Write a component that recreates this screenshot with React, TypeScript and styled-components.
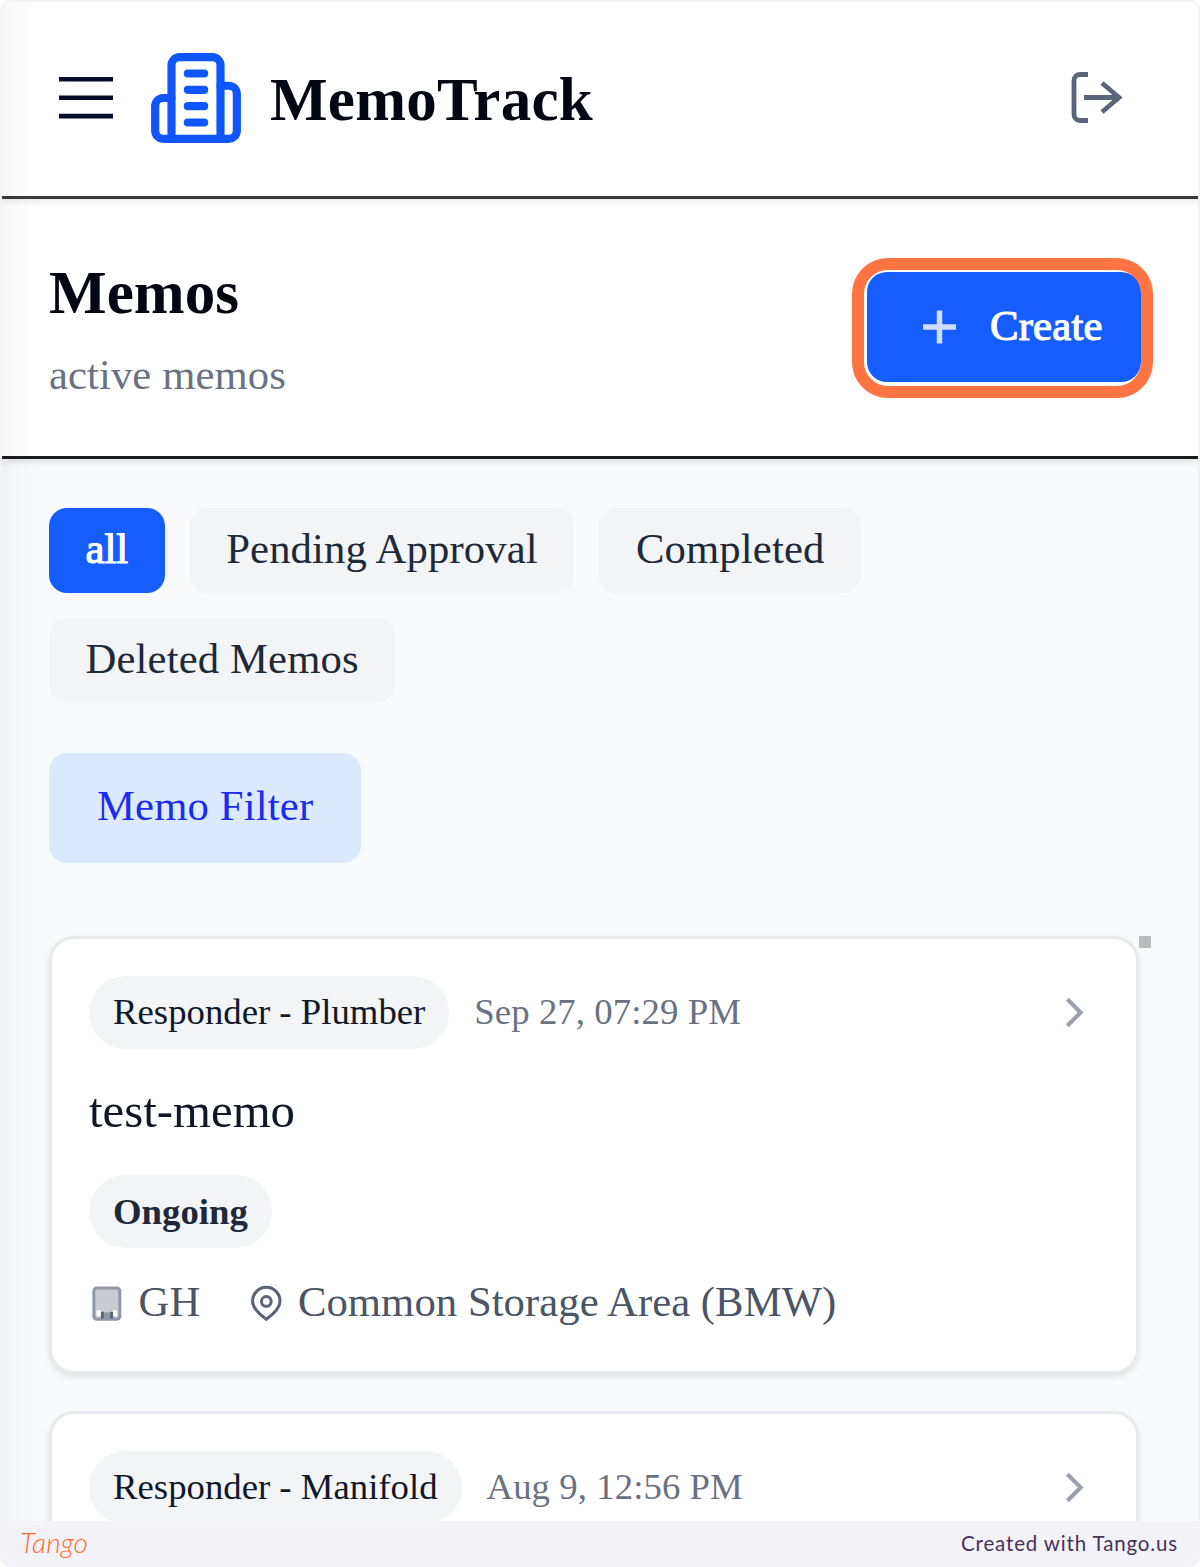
import React from "react";
import styled, { createGlobalStyle } from "styled-components";

const Global = createGlobalStyle`
  * { box-sizing: border-box; }
  html, body { margin: 0; padding: 0; background: #fff; }
  button { border: 0; margin: 0; font: inherit; cursor: pointer; }
  h1, h2, h3, p { margin: 0; font-weight: 400; }
`;

const serif = `"Liberation Serif", "Times New Roman", serif`;

const Frame = styled.div`
  width: 1200px;
  height: 1567px;
  display: flex;
  flex-direction: column;
  padding: 2px 2px 0;
  background: #f3f2f7;
  border-radius: 10px;
  overflow: hidden;
  font-family: ${serif};
`;

const Screen = styled.main`
  position: relative;
  height: 1519px;
  display: flex;
  flex-direction: column;
  overflow: hidden;
  border-radius: 8px 8px 0 0;
  background: #f9fafc;

  &::before {
    content: "";
    position: absolute;
    z-index: 3;
    inset: 0 auto 0 0;
    width: 38px;
    pointer-events: none;
    background: linear-gradient(90deg, rgba(20, 10, 20, 0.04), rgba(20, 10, 20, 0.014) 35%, rgba(20, 10, 20, 0));
  }
`;

const TopBar = styled.header`
  position: relative;
  z-index: 2;
  height: 197px;
  flex: none;
  display: flex;
  align-items: center;
  padding: 0 71px 2px 54px;
  background: #fff;
  border-bottom: 3px solid #3a3a3a;
  box-shadow: 0 2px 8px rgba(0, 0, 0, 0.1);
`;

const Brand = styled.div`
  flex: 1;
  display: flex;
  align-items: center;
  margin-left: 32px;
  gap: 25px;
`;

const BrandName = styled.h1`
  font-size: 61px;
  line-height: 85px;
  font-weight: 700;
  letter-spacing: 0.25px;
  color: #030712;
  padding-top: 3px;
`;

const PageHead = styled.section`
  position: relative;
  z-index: 1;
  height: 260px;
  flex: none;
  display: flex;
  justify-content: space-between;
  align-items: flex-start;
  padding: 49px 57px 0 47px;
  background: #fff;
  border-bottom: 3px solid #1c1c1c;
  box-shadow: 0 2px 8px rgba(0, 0, 0, 0.12);
`;

const Title = styled.h2`
  margin-top: 2px;
  font-size: 61px;
  line-height: 85px;
  font-weight: 700;
  letter-spacing: 0.1px;
  color: #030712;
`;

const Subtitle = styled.p`
  font-size: 42.7px;
  line-height: 61px;
  margin-top: 9px;
  letter-spacing: 0.08px;
  color: #6a7282;
`;

const CreateButton = styled.button`
  position: relative;
  display: flex;
  align-items: center;
  width: 274px;
  height: 110px;
  margin-top: 24px;
  padding: 0 0 3px 48px;
  gap: 26px;
  border-radius: 20px;
  background: #155dfc;
  color: #fff;
  font-size: 42.7px;
  letter-spacing: 0.2px;
  -webkit-text-stroke: 1.2px #fff;

  &::after {
    content: "";
    position: absolute;
    inset: -14px -12px -16px -15px;
    border: 12px solid #ff7442;
    border-radius: 36px;
  }
`;

const Content = styled.section`
  display: flex;
  flex-direction: column;
  align-items: flex-start;
  padding: 49px 59px 0 47px;
`;

const Tabs = styled.nav`
  display: flex;
  flex-wrap: wrap;
  gap: 25px;
  width: 900px;
`;

const Tab = styled.button<{ $active?: boolean }>`
  height: 85px;
  padding: 0 36.5px 4px;
  border-radius: 18px;
  font-size: 42.7px;
  letter-spacing: ${(p) => (p.$active ? "0" : "0.14px")};
  background: ${(p) => (p.$active ? "#155dfc" : "#f3f4f6")};
  color: ${(p) => (p.$active ? "#fff" : "#1e2939")};
  -webkit-text-stroke: ${(p) => (p.$active ? "1.2px #fff" : "0")};
`;

const FilterButton = styled.button`
  height: 110px;
  margin-top: 50px;
  padding: 0 48px 6px;
  border-radius: 18px;
  background: #dbeafe;
  color: #1b2cf0;
  font-size: 42.7px;
  letter-spacing: 0.15px;
`;

const List = styled.div`
  position: relative;
  display: flex;
  flex-direction: column;
  align-self: stretch;
  gap: 37px;
  margin-top: 73px;
`;

const Handle = styled.span`
  position: absolute;
  top: 0;
  right: -12px;
  width: 12px;
  height: 12px;
  background: #b9bcbc;
`;

const Card = styled.article`
  height: 438px;
  flex: none;
  padding: 37px;
  border: 3px solid #e7e9ed;
  border-radius: 25px;
  background: #fff;
  box-shadow: 0 3px 6px rgba(0, 0, 0, 0.1);
`;

const CardTop = styled.div`
  display: flex;
  align-items: center;
  gap: 25px;
`;

const Pill = styled.span<{ $strong?: boolean }>`
  display: inline-flex;
  align-items: center;
  height: 73px;
  padding: 0 24px ${(p) => (p.$strong ? "0" : "2px")};
  border-radius: 37px;
  background: #f3f4f6;
  color: ${(p) => (p.$strong ? "#1e2939" : "#101828")};
  font-size: 36.75px;
  font-weight: ${(p) => (p.$strong ? 700 : 400)};
  white-space: nowrap;
`;

const DateText = styled.span`
  flex: 1;
  padding-bottom: 2px;
  font-size: 36.75px;
  letter-spacing: 0.07px;
  color: #6a7282;
`;

const MemoTitle = styled.h3`
  margin: 26px 0 27px;
  font-size: 48.8px;
  line-height: 73px;
  color: #101828;
`;

const Meta = styled.div`
  display: flex;
  align-items: center;
  gap: 48px;
  margin-top: 23px;
  font-size: 42.7px;
  line-height: 61px;
  letter-spacing: 0.05px;
  color: #4a5565;
`;

const MetaItem = styled.span`
  display: flex;
  align-items: center;
  gap: 13px;

  svg { margin-top: 4px; }
`;

const Footer = styled.footer`
  height: 46px;
  display: flex;
  align-items: center;
  justify-content: space-between;
  padding: 0 20px 0 18px;
  font-family: Lato, sans-serif;
  color: #46335a;
`;

const Wordmark = styled.span`
  font-size: 28px;
  font-style: italic;
  font-weight: 300;
  line-height: 40px;
  padding-bottom: 4px;
  letter-spacing: 0.2px;
  color: #ff6a35;
`;

const Credit = styled.span`
  padding-bottom: 3px;
  font-size: 20.5px;
  letter-spacing: 0.85px;
`;

const MenuIcon = () => (
  <svg width="59" height="48" viewBox="0 0 59 48" stroke="#050d2b" strokeWidth="4.6">
    <path d="M3 5.2H57M3 23.7H57M3 42.1H57" />
  </svg>
);

const BuildingLogo = () => (
  <svg width="98" height="98" viewBox="0 0 24 24" fill="none" stroke="#0f56ff" strokeWidth="2" strokeLinecap="round" strokeLinejoin="round">
    <path d="M6 22V4a2 2 0 0 1 2-2h8a2 2 0 0 1 2 2v18Z" />
    <path d="M6 12H4a2 2 0 0 0-2 2v6a2 2 0 0 0 2 2h2" />
    <path d="M18 9h2a2 2 0 0 1 2 2v9a2 2 0 0 1-2 2h-2" />
    <path d="M10 6h4M10 10h4M10 14h4M10 18h4" />
  </svg>
);

const LogoutIcon = () => (
  <svg width="61" height="61" viewBox="0 0 61 61" fill="none" stroke="#5b6579" strokeWidth="4.8">
    <path d="M22 6.500H14a6 6 0 0 0-6 6v34a6 6 0 0 0 6 6H22" />
    <path d="M18 29.500H53M36 15l17 14.500L36 44" />
  </svg>
);

const PlusIcon = () => (
  <svg width="49" height="49" viewBox="0 0 49 49" stroke="#cfdcff" strokeWidth="5.5">
    <path d="M8 26H41M24.5 9.500V42.500" />
  </svg>
);

const Chevron = () => (
  <svg width="49" height="49" viewBox="0 0 24 24" fill="none" stroke="#99a1af" strokeWidth="2">
    <path d="m8.500 5.500 6.500 6.500-6.500 6.500" />
  </svg>
);

const BuildingIcon = () => (
  <svg width="36.600" height="36.600" viewBox="0 0 24 24" fill="none" stroke="#8f98a6" strokeWidth="2">
    <rect x="3.200" y="2" width="17" height="20.500" rx="2" fill="#c8cbd0" />
    <path d="M5 16.500h3v4H5zM15.500 16.500h3v4h-3z" fill="#fff" stroke="none" />
    <path d="M8.800 22v-4.500M14.800 22v-4.500" stroke="#596476" />
    <path d="M11.800 18v4" strokeWidth="4" />
  </svg>
);

const PinIcon = () => (
  <svg width="36.600" height="36.600" viewBox="0 0 24 24" fill="none" stroke="#5a6577" strokeWidth="2">
    <path d="M21 10.500c0 5-5.500 9.500-9 12-3.500-2.500-9-7-9-12a9 9 0 0 1 18 0Z" />
    <circle cx="12" cy="10.800" r="3.200" />
  </svg>
);

type Memo = { role: string; date: string; title: string; status: string; site: string; area: string };

const MemoCard = ({ memo, expanded }: { memo: Memo; expanded: boolean }) => (
  <Card>
    <CardTop>
      <Pill>{memo.role}</Pill>
      <DateText>{memo.date}</DateText>
      <Chevron />
    </CardTop>
    {expanded && (
      <>
        <MemoTitle>{memo.title}</MemoTitle>
        <Pill $strong>{memo.status}</Pill>
        <Meta>
          <MetaItem><BuildingIcon />{memo.site}</MetaItem>
          <MetaItem><PinIcon />{memo.area}</MetaItem>
        </Meta>
      </>
    )}
  </Card>
);

const memos: Memo[] = [
  { role: "Responder - Plumber", date: "Sep 27, 07:29 PM", title: "test-memo", status: "Ongoing", site: "GH", area: "Common Storage Area (BMW)" },
  { role: "Responder - Manifold", date: "Aug 9, 12:56 PM", title: "", status: "", site: "", area: "" },
];

export default function App() {
  return (
    <>
      <Global />
      <Frame>
        <Screen>
          <TopBar>
            <MenuIcon />
            <Brand>
              <BuildingLogo />
              <BrandName>MemoTrack</BrandName>
            </Brand>
            <LogoutIcon />
          </TopBar>
          <PageHead>
            <div>
              <Title>Memos</Title>
              <Subtitle>active memos</Subtitle>
            </div>
            <CreateButton><PlusIcon />Create</CreateButton>
          </PageHead>
          <Content>
            <Tabs>
              <Tab $active>all</Tab>
              <Tab>Pending Approval</Tab>
              <Tab>Completed</Tab>
              <Tab>Deleted Memos</Tab>
            </Tabs>
            <FilterButton>Memo Filter</FilterButton>
            <List>
              <Handle />
              {memos.map((memo) => (
                <MemoCard key={memo.role} memo={memo} expanded={memo.title !== ""} />
              ))}
            </List>
          </Content>
        </Screen>
        <Footer>
          <Wordmark>Tango</Wordmark>
          <Credit>Created with Tango.us</Credit>
        </Footer>
      </Frame>
    </>
  );
}
